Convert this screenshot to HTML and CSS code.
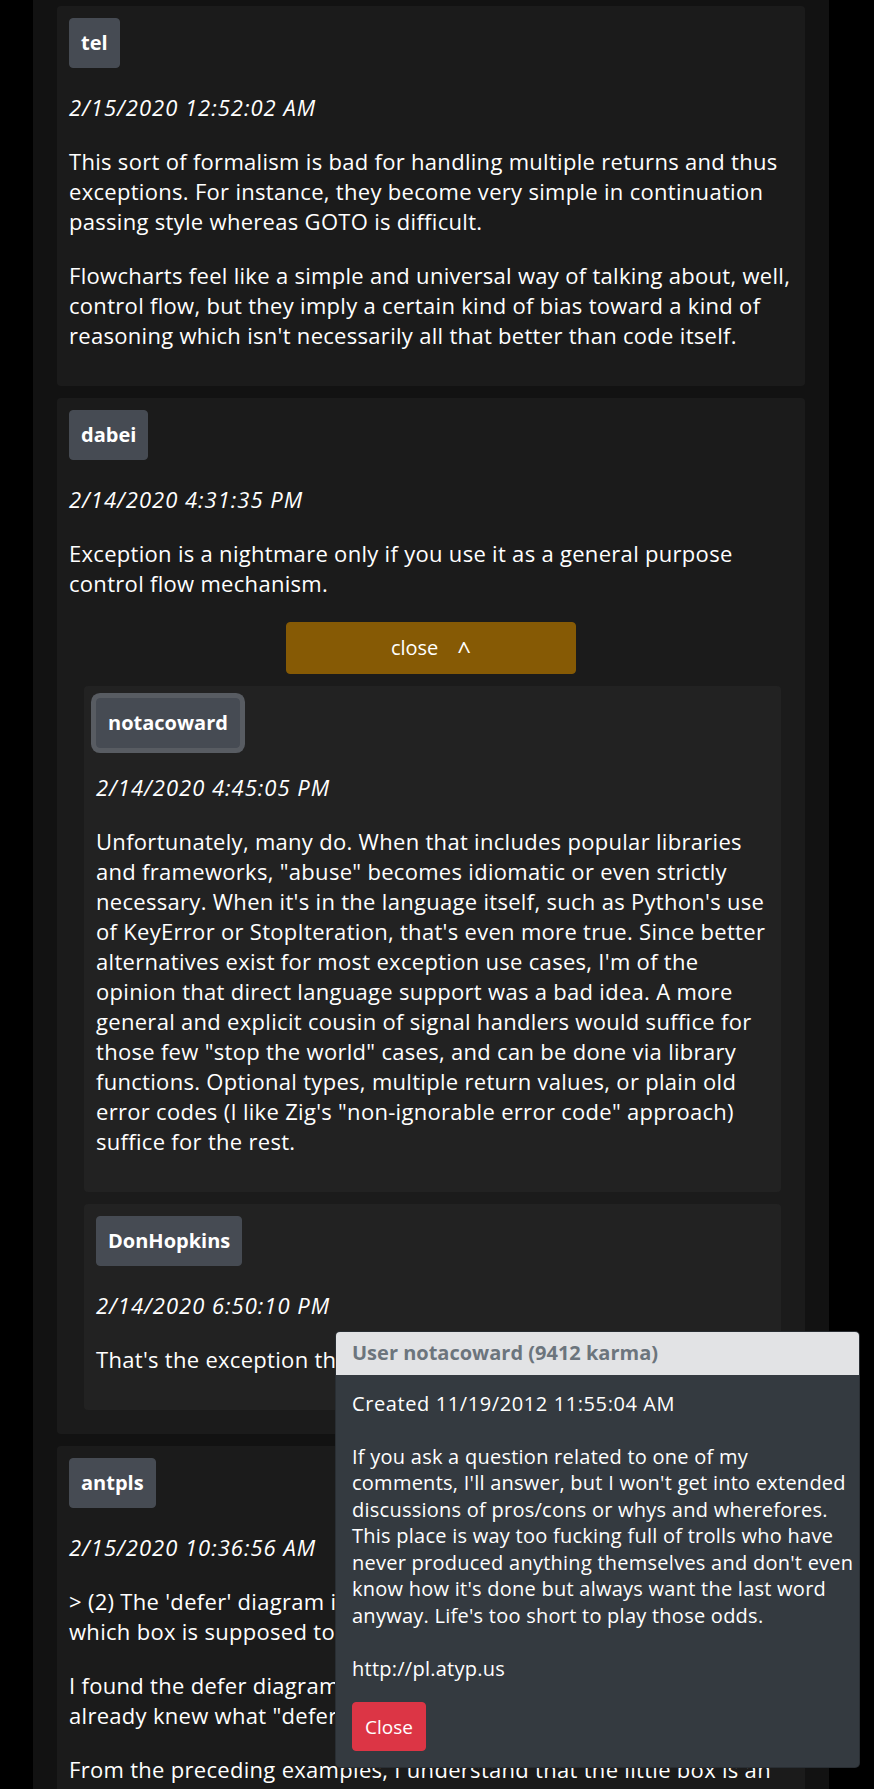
FILE: index.html
```html
<!DOCTYPE html>
<html lang="en">
<head>
<meta charset="utf-8">
<title>Comments</title>
<link rel="stylesheet" href="styles.css">
</head>
<body>
<main class="thread">
  <article class="comment">
    <div class="author"><button class="user">tel</button></div>
    <p class="date">2/15/2020 12:52:02 AM</p>
    <div class="text">
      <p>This sort of formalism is bad for handling multiple returns and thus<br>exceptions. For instance, they become very simple in continuation<br>passing style whereas GOTO is difficult.</p>
      <p>Flowcharts feel like a simple and universal way of talking about, well,<br>control flow, but they imply a certain kind of bias toward a kind of<br>reasoning which isn't necessarily all that better than code itself.</p>
    </div>
  </article>

  <article class="comment">
    <div class="author"><button class="user">dabei</button></div>
    <p class="date">2/14/2020 4:31:35 PM</p>
    <div class="text">
      <p>Exception is a nightmare only if you use it as a general purpose<br>control flow mechanism.</p>
    </div>
    <button class="toggle">close<span class="caret">^</span></button>
    <div class="replies">
      <article class="comment reply">
        <div class="author"><button class="user focused">notacoward</button></div>
        <p class="date">2/14/2020 4:45:05 PM</p>
        <div class="text">
          <p>Unfortunately, many do. When that includes popular libraries<br>and frameworks, "abuse" becomes idiomatic or even strictly<br>necessary. When it's in the language itself, such as Python's use<br>of KeyError or StopIteration, that's even more true. Since better<br>alternatives exist for most exception use cases, I'm of the<br>opinion that direct language support was a bad idea. A more<br>general and explicit cousin of signal handlers would suffice for<br>those few "stop the world" cases, and can be done via library<br>functions. Optional types, multiple return values, or plain old<br>error codes (I like Zig's "non-ignorable error code" approach)<br>suffice for the rest.</p>
        </div>
      </article>
      <article class="comment reply">
        <div class="author"><button class="user">DonHopkins</button></div>
        <p class="date">2/14/2020 6:50:10 PM</p>
        <div class="text">
          <p>That's the exception that proves the rule.</p>
        </div>
      </article>
    </div>
  </article>

  <article class="comment">
    <div class="author"><button class="user">antpls</button></div>
    <p class="date">2/15/2020 10:36:56 AM</p>
    <div class="text">
      <p>&gt; (2) The 'defer' diagram is confusing, because it's not obvious<br>which box is supposed to represent the deferred call.</p>
      <p>I found the defer diagram confusing too, and I only got it since I<br>already knew what "defer" does in Go.</p>
      <p>From the preceding examples, I understand that the little box is an<br>abbreviation for the function call it is attached to.</p>
    </div>
  </article>
</main>

<aside class="popover">
  <h3 class="popover-header">User notacoward (9412 karma)</h3>
  <div class="popover-body">
    <p class="created">Created 11/19/2012 11:55:04 AM</p>
    <p class="about">If you ask a question related to one of my<br>comments, I'll answer, but I won't get into extended<br>discussions of pros/cons or whys and wherefores.<br>This place is way too fucking full of trolls who have<br>never produced anything themselves and don't even<br>know how it's done but always want the last word<br>anyway. Life's too short to play those odds.</p>
    <p class="site">http://pl.atyp.us</p>
    <button class="btn-close">Close</button>
  </div>
</aside>
</body>
</html>
```

FILE: styles.css
```css
html, body {
  margin: 0;
  padding: 0;
  background: #000;
}

body {
  position: relative;
  font-family: "Open Sans", "Noto Sans", sans-serif;
  font-size: 22px;
  line-height: 30px;
  letter-spacing: 0.3px;
  color: #fff;
  height: 1789px;
  overflow: hidden;
}

.thread {
  box-sizing: border-box;
  width: 796px;
  margin-left: 33px;
  min-height: 1789px;
  padding: 6px 24px 12px;
  background: #121212;
}

.comment {
  background: #1b1b1b;
  border-radius: 4px;
  padding: 12px;
  margin-bottom: 12px;
}

.comment > * {
  margin: 0 0 24px;
}

.author {
  display: flex;
}

.user {
  font-family: inherit;
  font-size: 20px;
  font-weight: 700;
  line-height: 30px;
  letter-spacing: 0;
  color: #fff;
  background: #464b53;
  border: 1px solid #464b53;
  border-radius: 4px;
  padding: 9px 11px;
}

.user.focused {
  box-shadow: 0 0 0 5px #585c62;
}

.date {
  font-style: italic;
  letter-spacing: 1px;
}

.text p {
  margin: 0 0 24px;
  white-space: nowrap;
}

.text p:last-child {
  margin-bottom: 0;
}

.toggle {
  display: block;
  width: 40%;
  margin: 0 auto 12px;
  padding: 10px 12px;
  font-family: inherit;
  font-size: 20px;
  line-height: 30px;
  letter-spacing: 0;
  color: #fff;
  background: #865a05;
  border: 1px solid #865a05;
  border-radius: 4px;
}

.caret {
  display: inline-block;
  margin-left: 19px;
  font-size: 24px;
  line-height: 0;
  vertical-align: -4px;
}

.replies {
  margin: 0 12px 0 15px;
}

.reply {
  background: #222;
}

.popover {
  position: absolute;
  left: 335px;
  top: 1331px;
  width: 525px;
  box-sizing: border-box;
  background: #343a40;
  border: 1px solid rgba(0, 0, 0, 0.2);
  border-radius: 5px;
  overflow: hidden;
}

.popover-header {
  margin: 0;
  padding: 8px 16px;
  font-size: 20px;
  font-weight: 700;
  line-height: 26.5px;
  letter-spacing: 0;
  color: #6c757d;
  background: #e2e3e5;
}

.popover-body {
  padding: 16px;
  font-size: 20px;
  line-height: 26.5px;
  letter-spacing: 0.25px;
}

.popover-body p {
  margin: 0 0 26.5px;
  white-space: nowrap;
}

.popover-body .created {
  letter-spacing: 0.6px;
}

.popover-body .site {
  margin-bottom: 20px;
}

.btn-close {
  font-family: inherit;
  font-size: 19px;
  line-height: 30px;
  letter-spacing: 0;
  color: #fff;
  background: #dc3545;
  border: 1px solid #dc3545;
  border-radius: 4px;
  padding: 8.5px 12px;
}
```
